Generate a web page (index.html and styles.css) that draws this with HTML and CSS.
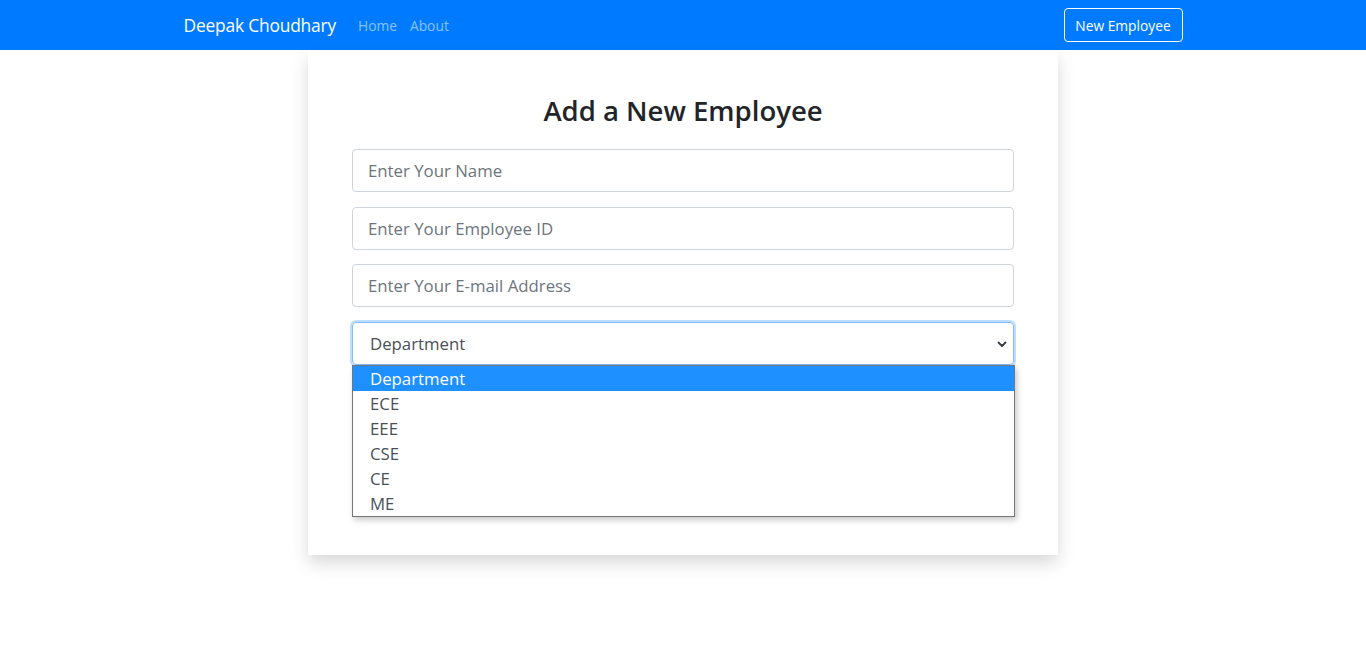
FILE: index.html
```html
<!DOCTYPE html>
<html lang="en">
<head>
<meta charset="utf-8">
<title>Add a New Employee</title>
<link rel="stylesheet" href="styles.css">
</head>
<body>
<nav class="navbar">
  <div class="nav-inner">
    <a class="brand" href="#">Deepak Choudhary</a>
    <ul class="nav-links">
      <li><a href="#">Home</a></li>
      <li><a href="#">About</a></li>
    </ul>
    <button class="btn-outline" type="button">New Employee</button>
  </div>
</nav>
<main class="page">
  <section class="card">
    <h2 class="title">Add a New Employee</h2>
    <form class="form">
      <input class="field" type="text" placeholder="Enter Your Name">
      <input class="field" type="text" placeholder="Enter Your Employee ID">
      <input class="field" type="email" placeholder="Enter Your E-mail Address">
      <div class="select-wrap">
        <div class="select">
          <span class="select-value">Department</span>
          <svg class="chevron" width="10" height="8" viewBox="0 0 10 8" aria-hidden="true">
            <path d="M1.5 2.5 L5 6 L8.5 2.5" fill="none" stroke="#343a40" stroke-width="1.8" stroke-linecap="round" stroke-linejoin="round"/>
          </svg>
        </div>
        <ul class="dropdown">
          <li class="option selected">Department</li>
          <li class="option">ECE</li>
          <li class="option">EEE</li>
          <li class="option">CSE</li>
          <li class="option">CE</li>
          <li class="option">ME</li>
        </ul>
      </div>
    </form>
  </section>
</main>
</body>
</html>
```

FILE: styles.css
```css
* { box-sizing: border-box; }

body {
  margin: 0;
  font-family: "Open Sans", "Noto Sans", "Liberation Sans", sans-serif;
  color: #212529;
  background: #fff;
}

.navbar {
  background: #007bff;
  height: 50px;
}

.nav-inner {
  width: 999px;
  margin: 0 auto;
  height: 100%;
  display: flex;
  align-items: center;
}

.brand {
  color: #fff;
  text-decoration: none;
  font-size: 17.4px;
  margin-right: 22px;
  letter-spacing: -0.2px;
}

.nav-links {
  list-style: none;
  margin: 0;
  padding: 0;
  display: flex;
  gap: 13px;
  flex: 1;
}

.nav-links a {
  color: rgba(255, 255, 255, 0.55);
  text-decoration: none;
  font-size: 13.8px;
}

.btn-outline {
  font-family: inherit;
  font-size: 13.8px;
  color: #fff;
  background: transparent;
  border: 1px solid #fff;
  border-radius: 4px;
  height: 34px;
  width: 119px;
  padding: 0;
}

.page {
  display: flex;
  justify-content: center;
  padding-bottom: 40px;
}

.card {
  width: 750px;
  min-height: 505px;
  padding: 42px 44px 44px;
  background: #fff;
  box-shadow: 0 8px 16px rgba(0, 0, 0, 0.15);
}

.title {
  margin: 0 0 19px;
  text-align: center;
  font-size: 27.5px;
  font-weight: 600;
  line-height: 38px;
  color: #212529;
}

.form {
  display: flex;
  flex-direction: column;
}

.field {
  display: block;
  width: 100%;
  height: 43px;
  margin-bottom: 14.7px;
  padding: 0 15px;
  font-family: inherit;
  font-size: 16.8px;
  color: #495057;
  border: 1px solid #ced4da;
  border-radius: 4px;
  outline: none;
}

.field::placeholder {
  color: #6c757d;
}

.select-wrap {
  position: relative;
}

.select {
  height: 43px;
  display: flex;
  align-items: center;
  justify-content: space-between;
  padding: 0 6px 0 17px;
  font-size: 16.8px;
  color: #495057;
  border: 1px solid #80bdff;
  border-radius: 4px;
  box-shadow: 0 0 0 2px rgba(0, 123, 255, 0.25);
}

.chevron {
  display: block;
}

.dropdown {
  position: absolute;
  top: 43px;
  left: 0;
  width: 663px;
  margin: 0;
  padding: 0;
  list-style: none;
  background: #fff;
  border: 1px solid #767676;
  box-shadow: 2px 3px 6px rgba(0, 0, 0, 0.22);
  z-index: 2;
}

.option {
  height: 25px;
  line-height: 25px;
  padding-left: 17px;
  font-size: 16.8px;
  color: #495057;
}

.option.selected {
  background: #1e90ff;
  color: #fff;
}
```
